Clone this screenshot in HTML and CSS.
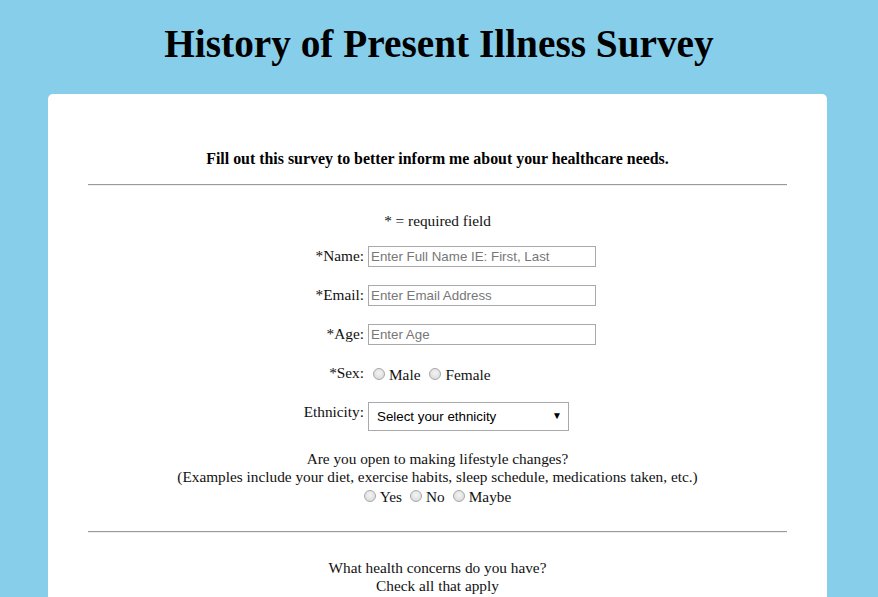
FILE: index.html
```html
<!DOCTYPE html>
<html>
<head>
<meta charset="utf-8">
<link rel="stylesheet" href="styles.css">
</head>
<body>
<h1 class="title">History of Present Illness Survey</h1>
<div class="card">
  <p class="intro">Fill out this survey to better inform me about your healthcare needs.</p>
  <hr class="rule">
  <p class="note">* = required field</p>
  <form class="fields">
    <label class="lbl" for="name">*Name:</label>
    <div class="ctl"><input class="txt" id="name" type="text" placeholder="Enter Full Name IE: First, Last"></div>
    <label class="lbl" for="email">*Email:</label>
    <div class="ctl"><input class="txt" id="email" type="text" placeholder="Enter Email Address"></div>
    <label class="lbl" for="age">*Age:</label>
    <div class="ctl"><input class="txt" id="age" type="text" placeholder="Enter Age"></div>
    <span class="lbl">*Sex:</span>
    <div class="ctl radios"><input class="rad" type="radio" name="sex"><span class="opt">Male</span><input class="rad" type="radio" name="sex"><span class="opt">Female</span></div>
    <label class="lbl" for="eth">Ethnicity:</label>
    <div class="ctl"><span class="selwrap"><select class="sel" id="eth"><option>Select your ethnicity</option></select></span></div>
  </form>
  <div class="question">
    <div>Are you open to making lifestyle changes?</div>
    <div>(Examples include your diet, exercise habits, sleep schedule, medications taken, etc.)</div>
    <div class="qradios"><input class="rad" type="radio" name="ls"><span class="opt">Yes</span><input class="rad" type="radio" name="ls"><span class="opt">No</span><input class="rad" type="radio" name="ls"><span class="opt">Maybe</span></div>
  </div>
  <hr class="rule rule-gap">
  <div class="concerns">
    <div>What health concerns do you have?</div>
    <div>Check all that apply</div>
  </div>
</div>
</body>
</html>
```
FILE: styles.css
```css
html, body {
  margin: 0;
  padding: 0;
}
body {
  background: #87ceeb;
  font-family: "Liberation Serif", "Times New Roman", serif;
  color: #111;
  overflow: hidden;
}
.title {
  margin: 22px 0 28px;
  font-size: 39.3px;
  line-height: 44px;
  text-align: center;
  font-weight: bold;
  color: #000;
}
.card {
  margin-left: 48px;
  width: 699px;
  background: #fff;
  border-radius: 5px;
  padding: 56px 40px 40px;
  font-size: 15.3px;
  line-height: 18px;
  text-align: center;
}
.intro {
  margin: 0;
  font-weight: bold;
  font-size: 15.9px;
  color: #000;
}
.rule {
  margin: 16px 0 0;
  border: none;
  height: 0;
  border-top: 1px solid #9a9a9a;
  border-bottom: 1px solid #eeeeee;
}
.rule-gap {
  margin-top: 26px;
}
.note {
  margin: 26px 0 0;
}
.fields {
  margin: 16px 0 0;
  display: grid;
  grid-template-columns: 276px 1fr;
  column-gap: 4px;
  row-gap: 18px;
  align-items: start;
}
.lbl {
  text-align: right;
  line-height: 20px;
}
.ctl {
  text-align: left;
  display: flex;
  align-items: center;
}
.txt {
  box-sizing: border-box;
  width: 228px;
  height: 21px;
  margin: 0;
  padding: 1px 2px;
  border: 1px solid #a9a9a9;
  border-radius: 0;
  font-family: Arial, "Liberation Sans", sans-serif;
  font-size: 13.33px;
  outline: none;
}
.txt::placeholder {
  color: #777;
}
.radios {
  height: 21px;
}
.rad {
  -webkit-appearance: none;
  appearance: none;
  box-sizing: border-box;
  width: 12px;
  height: 12px;
  margin: 0 4px 0 5px;
  border: 1px solid #a8a8a8;
  border-radius: 50%;
  background: radial-gradient(circle at 50% 40%, #f4f4f4 0%, #dedede 70%, #cfcfcf 100%);
  flex: none;
}
.opt {
  margin-right: 4px;
  position: relative;
  top: 1px;
}
.selwrap {
  position: relative;
  display: inline-block;
}
.selwrap::after {
  content: "\25BC";
  position: absolute;
  right: 7px;
  top: 8px;
  font-size: 10px;
  line-height: 12px;
  color: #000;
  pointer-events: none;
}
.sel {
  -webkit-appearance: none;
  appearance: none;
  box-sizing: border-box;
  width: 201px;
  height: 29px;
  margin: 0;
  padding: 0 0 0 8px;
  border: 1px solid #a9a9a9;
  border-radius: 0;
  background: #fff;
  font-family: Arial, "Liberation Sans", sans-serif;
  font-size: 13.33px;
  color: #000;
}
.question {
  margin-top: 19px;
}
.qradios {
  display: flex;
  justify-content: center;
  align-items: center;
  height: 19px;
}
.qradios .rad {
  margin: 0 4px 0 4px;
}
.concerns {
  margin-top: 26px;
}
```
